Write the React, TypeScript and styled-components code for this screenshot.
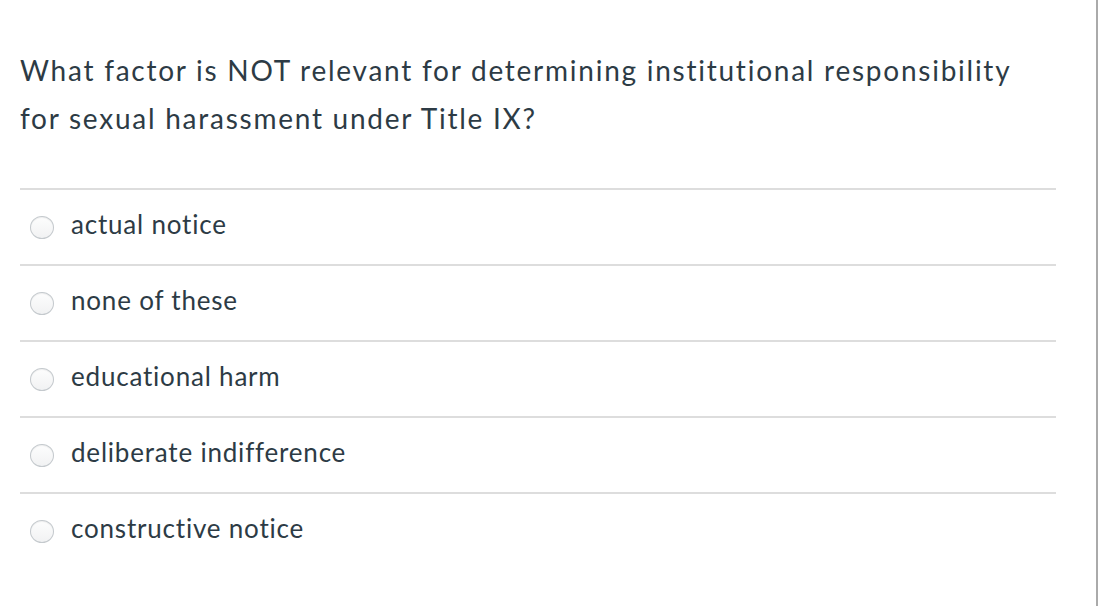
import React from 'react';
import styled, { createGlobalStyle } from 'styled-components';

const Global = createGlobalStyle`
  html, body {
    margin: 0;
    padding: 0;
    background: #fff;
  }
  body {
    font-family: Lato, "Liberation Sans", sans-serif;
    color: #2d3b45;
  }
`;

const Page = styled.div`
  width: 1096px;
  height: 606px;
  border-right: 2px solid #aaaaaa;
  overflow: hidden;
`;

const Question = styled.div`
  padding: 46px 40px 0 20px;
`;

const Prompt = styled.p`
  margin: 0 0 46px;
  max-width: 1015px;
  font-size: 28px;
  line-height: 48px;
  letter-spacing: 1.75px;
  font-weight: 400;
`;

const Answers = styled.div`
  display: flex;
  flex-direction: column;
`;

const Answer = styled.label`
  display: flex;
  align-items: center;
  height: 74px;
  border-top: 2px solid #dddddd;
  padding-left: 10px;
  gap: 17px;
  cursor: pointer;
`;

const Radio = styled.span`
  width: 22px;
  height: 21px;
  border-radius: 50%;
  border: 1px solid #c4c9cd;
  background: linear-gradient(#fdfdfd, #f1f2f3);
  box-shadow: inset 0 1px 1px rgba(0, 0, 0, 0.06);
  flex: none;
`;

const AnswerText = styled.span`
  font-size: 26px;
  line-height: 30px;
  letter-spacing: 0.8px;
  margin-bottom: 6px;
`;

const options = [
  'actual notice',
  'none of these',
  'educational harm',
  'deliberate indifference',
  'constructive notice',
];

export default function App() {
  return (
    <Page>
      <Global />
      <Question>
        <Prompt>
          What factor is NOT relevant for determining institutional responsibility
          for sexual harassment under Title IX?
        </Prompt>
        <Answers>
          {options.map(o => (
            <Answer key={o}>
              <Radio />
              <AnswerText>{o}</AnswerText>
            </Answer>
          ))}
        </Answers>
      </Question>
    </Page>
  );
}
